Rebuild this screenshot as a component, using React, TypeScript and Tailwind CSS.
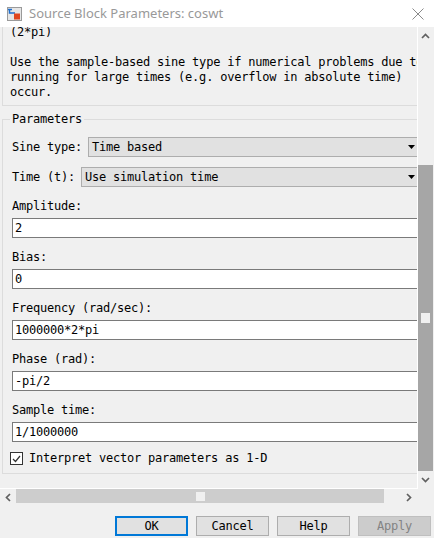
import React from "react";

const mono = "font-['DejaVu_Sans_Mono',monospace] text-[12px] tracking-[-0.22px] text-black";

function ChevUp() {
  return (
    <svg width="9" height="6" viewBox="0 0 9 6">
      <path d="M1 5 L4.5 1.5 L8 5" stroke="#606060" strokeWidth="1.7" fill="none" />
    </svg>
  );
}
function ChevDown() {
  return (
    <svg width="9" height="6" viewBox="0 0 9 6">
      <path d="M1 1 L4.5 4.5 L8 1" stroke="#606060" strokeWidth="1.7" fill="none" />
    </svg>
  );
}
function ChevLeft() {
  return (
    <svg width="6" height="9" viewBox="0 0 6 9">
      <path d="M5 1 L1.5 4.5 L5 8" stroke="#606060" strokeWidth="1.7" fill="none" />
    </svg>
  );
}
function ChevRight() {
  return (
    <svg width="6" height="9" viewBox="0 0 6 9">
      <path d="M1 1 L4.5 4.5 L1 8" stroke="#606060" strokeWidth="1.7" fill="none" />
    </svg>
  );
}

function Dropdown({ value }: { value: string }) {
  return (
    <div className="flex-1 h-[20px] bg-[#e1e1e1] border border-[#adadad] flex items-center pl-[3px] pr-[7px]">
      <span className="flex-1 leading-[18px]">{value}</span>
      <svg width="7" height="4" viewBox="0 0 7 4">
        <path d="M0 0 H7 L3.5 4 Z" fill="#000" />
      </svg>
    </div>
  );
}

function Field({ label, value }: { label: string; value: string }) {
  return (
    <>
      <div className="mt-[12px] h-[15px] leading-[15px]">{label}</div>
      <div className="mt-[4px] h-[20px] bg-white border border-[#7a7a7a] pl-[2px] leading-[18px]">{value}</div>
    </>
  );
}

function Button({ label, variant }: { label: string; variant?: "default" | "disabled" }) {
  const cls =
    variant === "default"
      ? "border-2 border-[#0078d7] bg-[#e1e1e1] text-black"
      : variant === "disabled"
      ? "border border-[#bfbfbf] bg-[#cccccc] text-[#838383]"
      : "border border-[#adadad] bg-[#e1e1e1] text-black";
  return (
    <div className={`w-[73px] h-[20px] flex items-center justify-center ${cls}`}>{label}</div>
  );
}

export default function App() {
  return (
    <div className={`w-[434px] h-[538px] bg-[#f0f0f0] flex flex-col overflow-hidden ${mono}`}>
      {/* Title bar */}
      <div className="h-[27px] bg-white flex items-center shrink-0">
        <div className="ml-[7px] w-[15px] h-[14px]">
          <svg width="15" height="14" viewBox="0 0 15 14">
            <rect x="0.5" y="0.5" width="14" height="13" fill="#e6e6e6" stroke="#9a9a9a" />
            <path d="M2.5 2 V6 H8" stroke="#1e6fd0" strokeWidth="1.5" fill="none" />
            <path d="M1 2.5 H5" stroke="#1e6fd0" strokeWidth="1.5" fill="none" />
            <rect x="7" y="6.5" width="6" height="6" fill="#e0461e" />
          </svg>
        </div>
        <span className="ml-[7px] font-['Noto_Sans',sans-serif] text-[13px] tracking-[0px] text-[#999999]">
          Source Block Parameters: coswt
        </span>
        <div className="ml-auto mr-[10px] w-[12px] h-[12px]">
          <svg width="12" height="12" viewBox="0 0 12 12">
            <path d="M0.5 0.5 L11.5 11.5 M11.5 0.5 L0.5 11.5" stroke="#8a8a8a" strokeWidth="1" />
          </svg>
        </div>
      </div>

      {/* Main area */}
      <div className="flex h-[462px] shrink-0">
        <div className="w-[418px] h-[462px] border-r border-b border-white overflow-hidden">
          <div className="w-[440px] mt-[-2px]">
            {/* Description */}
            <div className="ml-[2px] border border-t-0 border-[#dcdcdc] pl-[7px] pb-[5px] leading-[15px] whitespace-pre">
              <div>(2*pi)</div>
              <div>&nbsp;</div>
              <div>Use the sample-based sine type if numerical problems due to</div>
              <div>running for large times (e.g. overflow in absolute time)</div>
              <div>occur.</div>
            </div>

            {/* Parameters */}
            <fieldset className="ml-[2px] mt-[6px] border border-[#dcdcdc] pl-[9px] pr-[16px] pb-[8px]">
              <legend className="ml-[-2px] px-[2px] leading-[15px]">Parameters</legend>
              <div className="mt-[10px] h-[20px] flex items-center gap-[6px]">
                <span>Sine type:</span>
                <Dropdown value="Time based" />
              </div>
              <div className="mt-[10px] h-[20px] flex items-center gap-[6px]">
                <span>Time (t):</span>
                <Dropdown value="Use simulation time" />
              </div>
              <Field label="Amplitude:" value="2" />
              <Field label="Bias:" value="0" />
              <Field label="Frequency (rad/sec):" value="1000000*2*pi" />
              <Field label="Phase (rad):" value="-pi/2" />
              <Field label="Sample time:" value="1/1000000" />
              <div className="mt-[10px] h-[13px] flex items-center ml-[-2px] gap-[6px]">
                <div className="w-[13px] h-[13px] border border-[#333333] bg-white flex items-center justify-center">
                  <svg width="9" height="8" viewBox="0 0 9 8">
                    <path d="M1 4 L3.5 6.5 L8 1" stroke="#333333" strokeWidth="1.2" fill="none" />
                  </svg>
                </div>
                <span className="leading-[15px]">Interpret vector parameters as 1-D</span>
              </div>
            </fieldset>
          </div>
        </div>

        {/* Vertical scrollbar */}
        <div className="w-[16px] h-[462px] flex flex-col">
          <div className="h-[17px] flex items-center justify-center pr-[1px]">
            <ChevUp />
          </div>
          <div className="h-[121px]" />
          <div className="flex-1 w-[15px] bg-[#a6a6a6] flex items-center justify-center">
            <div className="w-[9px] h-[10px] bg-[#f0f0f0]" />
          </div>
          <div className="h-[17px] flex items-center justify-center pr-[1px]">
            <ChevDown />
          </div>
          <div className="h-[1px]" />
        </div>
      </div>

      {/* Horizontal scrollbar */}
      <div className="h-[17px] flex shrink-0">
        <div className="w-[16px] flex items-center justify-center">
          <ChevLeft />
        </div>
        <div className="w-[384px]">
          <div className="w-[368px] h-[14px] bg-[#cdcdcd] flex items-center justify-center">
            <div className="w-[9px] h-[9px] bg-[#f0f0f0]" />
          </div>
        </div>
        <div className="w-[17px] flex items-center justify-center">
          <ChevRight />
        </div>
      </div>

      {/* Buttons */}
      <div className="flex justify-end gap-[8px] pt-[10px] pr-[3px]">
        <Button label="OK" variant="default" />
        <Button label="Cancel" />
        <Button label="Help" />
        <Button label="Apply" variant="disabled" />
      </div>
    </div>
  );
}
